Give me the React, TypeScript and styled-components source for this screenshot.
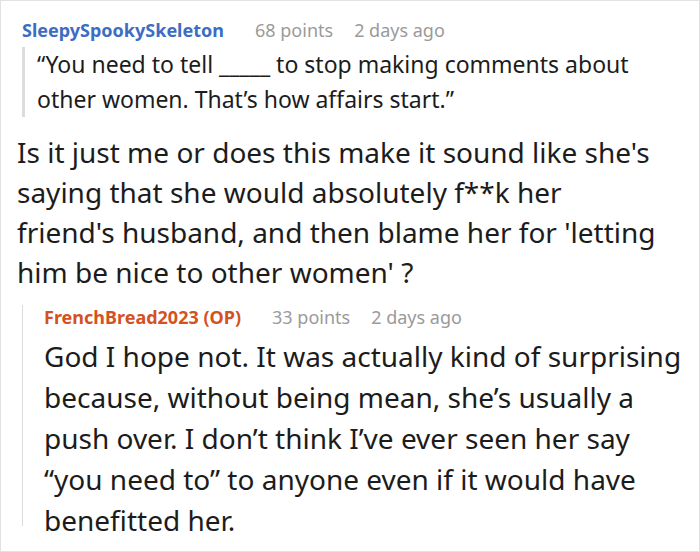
import styled, { createGlobalStyle } from 'styled-components'

const GlobalStyle = createGlobalStyle`
  html, body {
    margin: 0;
    padding: 0;
    background: #ffffff;
  }
  body {
    font-family: 'Noto Sans', 'Open Sans', sans-serif;
  }
`

const Frame = styled.div`
  box-sizing: border-box;
  width: 700px;
  height: 552px;
  overflow: hidden;
  border: 1px solid #e2e2e2;
  background: #ffffff;
  color: #1c1c1c;
`

const Comment = styled.div`
  padding: 17px 0 0 21px;
`

const MetaRow = styled.div<{ $top?: number }>`
  display: flex;
  align-items: baseline;
  height: 24px;
  line-height: 24px;
  font-size: 18px;
  margin-top: ${(p) => p.$top ?? 0}px;
`

const Author = styled.span<{ $color: string }>`
  font-weight: 700;
  color: ${(p) => p.$color};
  margin-right: 31px;
`

const Meta = styled.span`
  color: #9a9a9a;
  margin-right: 21px;
`

const Quote = styled.blockquote`
  margin: 5px 0 0 0;
  padding: 0 0 0 12px;
  border-left: 3px solid #dcdcdc;
  font-size: 23px;
  line-height: 35px;
  color: #1c1c1c;
`

const Body = styled.p<{ $pad: string; $lh: number }>`
  margin: 0;
  padding: ${(p) => p.$pad};
  font-size: 28px;
  line-height: ${(p) => p.$lh}px;
  color: #1c1c1c;
`

const Reply = styled.div`
  margin: 21px 0 0 0;
  border-left: 1px solid #dcdcdc;
  padding: 0 0 0 21px;
  height: 221px;
`

const Line = styled.span`
  display: block;
  white-space: nowrap;
`

const App = () => {
  return (
    <>
      <GlobalStyle />
      <Frame>
        <Comment>
          <MetaRow>
            <Author $color="#3c6dc2">SleepySpookySkeleton</Author>
            <Meta>68 points</Meta>
            <Meta>2 days ago</Meta>
          </MetaRow>
          <Quote>
            <Line>“You need to tell _____ to stop making comments about</Line>
            <Line>other women. That’s how affairs start.”</Line>
          </Quote>
        </Comment>
        <Body $pad="15px 0 0 16px" $lh={40}>
          <Line>Is it just me or does this make it sound like she's</Line>
          <Line>saying that she would absolutely f**k her</Line>
          <Line>friend's husband, and then blame her for 'letting</Line>
          <Line>him be nice to other women' ?</Line>
        </Body>
        <Comment style={{ paddingTop: 0 }}>
          <Reply>
            <MetaRow $top={-8}>
              <Author $color="#d4521f">FrenchBread2023 (OP)</Author>
              <Meta>33 points</Meta>
              <Meta>2 days ago</Meta>
            </MetaRow>
            <Body $pad="7px 0 0 0" $lh={41}>
              <Line>God I hope not. It was actually kind of surprising</Line>
              <Line>because, without being mean, she’s usually a</Line>
              <Line>push over. I don’t think I’ve ever seen her say</Line>
              <Line>“you need to” to anyone even if it would have</Line>
              <Line>benefitted her.</Line>
            </Body>
          </Reply>
        </Comment>
      </Frame>
    </>
  )
}

export default App
